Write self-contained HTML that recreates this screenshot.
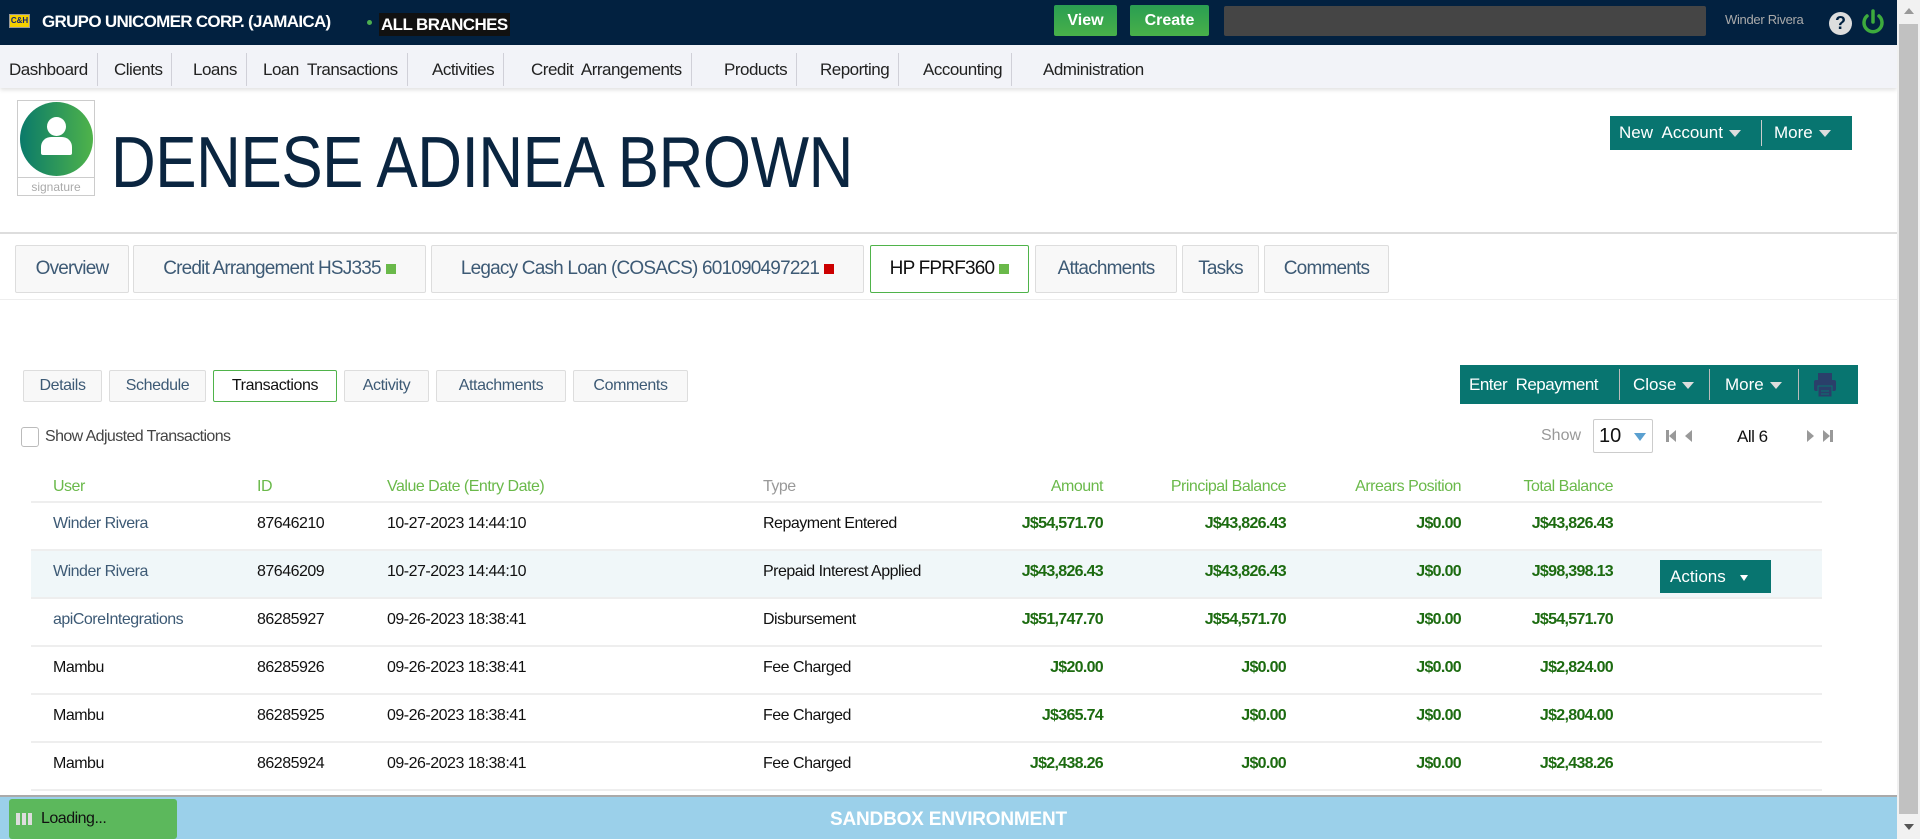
<!DOCTYPE html>
<html><head><meta charset="utf-8"><style>
*{box-sizing:border-box;margin:0;padding:0}
body{width:1920px;height:839px;overflow:hidden;background:#fff;font-family:"Liberation Sans",sans-serif;position:relative;color:#222}
.a{position:absolute;white-space:nowrap}
#top{left:0;top:0;width:1897px;height:45px;background:#022140}
#nav{left:0;top:45px;width:1897px;height:43px;background:#f2f3f8;box-shadow:0 2px 4px rgba(0,0,0,.12)}
.ni{position:absolute;top:8px;height:33px;line-height:33px;font-size:17px;color:#222;border-right:1px solid #d0d0d8;padding:0 9px;letter-spacing:-.5px}
.tab{position:absolute;top:245px;height:48px;line-height:46px;border:1px solid #ddd;border-radius:2px;background:#f8f8f8;font-size:19px;color:#3d5a75;text-align:center;letter-spacing:-.8px}
.st{position:absolute;top:370px;height:32px;line-height:30px;border:1px solid #ddd;border-radius:2px;background:#f8f8f8;font-size:16px;color:#3d5a75;text-align:center;letter-spacing:-.4px}
.sq{display:inline-block;width:10px;height:10px;margin-left:5px;vertical-align:middle}
.th{position:absolute;top:478px;font-size:16px;color:#6ab94a;letter-spacing:-.5px}
.row{position:absolute;left:31px;width:1791px;height:48px;border-bottom:2px solid #eee}
.c{position:absolute;top:12px;font-size:16px;letter-spacing:-.5px;white-space:nowrap}
.u{color:#3d5a75}.n{color:#111}
.m{color:#1c6b10;font-weight:bold;text-align:right;letter-spacing:-.7px}
.tri{display:inline-block;width:0;height:0;border-left:6px solid transparent;border-right:6px solid transparent;border-top:7px solid #fff;vertical-align:middle;margin-left:6px}
</style></head><body>
<div class="a" id="top">
 <div class="a" style="left:9px;top:14px;width:21px;height:14px;background:#f5d000;border:1px solid #999;font-size:8px;color:#127;font-weight:bold;line-height:12px;text-align:center">C&amp;H</div>
 <div class="a" style="left:42px;top:12px;font-size:17px;font-weight:bold;color:#fff;letter-spacing:-.7px">GRUPO UNICOMER CORP. (JAMAICA)</div>
 <div class="a" style="left:367px;top:20px;width:5px;height:5px;border-radius:50%;background:#4caf50"></div>
 <div class="a" style="left:379px;top:13px;height:23px;background:#111;color:#fff;font-weight:bold;font-size:17px;line-height:23px;padding:0 2px;letter-spacing:-.6px">ALL BRANCHES</div>
 <div class="a" style="left:1054px;top:5px;width:63px;height:31px;background:linear-gradient(#2a9e52,#48b049);border-radius:2px;color:#fff;font-weight:bold;font-size:16px;line-height:31px;text-align:center">View</div>
 <div class="a" style="left:1130px;top:5px;width:79px;height:31px;background:linear-gradient(#2a9e52,#48b049);border-radius:2px;color:#fff;font-weight:bold;font-size:16px;line-height:31px;text-align:center">Create</div>
 <div class="a" style="left:1224px;top:6px;width:482px;height:30px;background:#454545;border-radius:2px"></div>
 <div class="a" style="left:1725px;top:12px;font-size:13px;color:#aaa;letter-spacing:-.3px">Winder Rivera</div>
 <div class="a" style="left:1829px;top:12px;width:23px;height:23px;border-radius:50%;background:#ddd;color:#022140;font-weight:bold;font-size:18px;line-height:23px;text-align:center">?</div>
 <svg class="a" style="left:1860px;top:9px" width="26" height="28" viewBox="0 0 26 28"><path d="M7 7 A9 9 0 1 0 19 7" fill="none" stroke="#3dab3d" stroke-width="3.5" stroke-linecap="round"/><line x1="13" y1="2" x2="13" y2="13" stroke="#3dab3d" stroke-width="3.5" stroke-linecap="round"/></svg>
</div>
<div class="a" id="nav">
 <div class="ni" style="left:0">Dashboard</div>
 <div class="ni" style="left:105px">Clients</div>
 <div class="ni" style="left:184px">Loans</div>
 <div class="ni" style="left:254px">Loan&nbsp; Transactions</div>
 <div class="ni" style="left:423px">Activities</div>
 <div class="ni" style="left:522px">Credit&nbsp; Arrangements</div>
 <div class="ni" style="left:715px">Products</div>
 <div class="ni" style="left:811px">Reporting</div>
 <div class="ni" style="left:914px">Accounting</div>
 <div class="ni" style="left:1034px;border:none">Administration</div>
</div>
<div class="a" style="left:17px;top:100px;width:78px;height:96px;border:1px solid #ccc"></div>
<div class="a" style="left:20px;top:102px;width:73px;height:74px;border-radius:50%;background:linear-gradient(90deg,#0a7a6a,#4fb34a)"></div>
<div class="a" style="left:47px;top:117px;width:19px;height:19px;border-radius:50%;background:#fff"></div>
<div class="a" style="left:41px;top:137px;width:31px;height:18px;border-radius:10px 10px 2px 2px;background:#fff"></div>
<div class="a" style="left:17px;top:177px;width:78px;height:19px;border-top:1px solid #ccc;font-size:12px;color:#aaa;text-align:center;line-height:18px">signature</div>
<div class="a" style="left:111px;top:118px;font-size:72px;color:#0a2540;letter-spacing:-.5px;line-height:90px;transform:scaleX(.86);transform-origin:left top">DENESE ADINEA BROWN</div>
<div class="a" style="left:1610px;top:116px;width:242px;height:34px;background:#087570;color:#fff;font-size:17px;line-height:34px">
 <span class="a" style="left:9px;top:0">New&nbsp; Account<span class="tri" style="border-top-color:#ddd"></span></span>
 <span class="a" style="left:151px;top:4px;width:1px;height:26px;background:#ccc"></span>
 <span class="a" style="left:164px;top:0">More<span class="tri" style="border-top-color:#ddd"></span></span>
</div>
<div class="a" style="left:0;top:232px;width:1897px;height:2px;background:#ddd"></div>
<div class="tab" style="left:15px;width:114px">Overview</div>
<div class="tab" style="left:133px;width:293px">Credit Arrangement HSJ335<span class="sq" style="background:#6ab94a"></span></div>
<div class="tab" style="left:431px;width:433px">Legacy Cash Loan (COSACS) 601090497221<span class="sq" style="background:#c00"></span></div>
<div class="tab" style="left:870px;width:159px;border-color:#4fb34a;color:#111;background:#fff">HP FPRF360<span class="sq" style="background:#6ab94a"></span></div>
<div class="tab" style="left:1035px;width:142px">Attachments</div>
<div class="tab" style="left:1182px;width:77px">Tasks</div>
<div class="tab" style="left:1264px;width:125px">Comments</div>
<div class="a" style="left:0;top:299px;width:1897px;height:1px;background:#eee"></div>
<div class="st" style="left:23px;width:79px">Details</div>
<div class="st" style="left:109px;width:97px">Schedule</div>
<div class="st" style="left:213px;width:124px;border-color:#4fb34a;color:#111;background:#fff">Transactions</div>
<div class="st" style="left:344px;width:85px">Activity</div>
<div class="st" style="left:436px;width:130px">Attachments</div>
<div class="st" style="left:573px;width:115px">Comments</div>
<div class="a" style="left:1460px;top:365px;width:398px;height:39px;background:#087570;color:#fff;font-size:17px;line-height:39px">
 <span class="a" style="left:9px;top:0;letter-spacing:-.5px">Enter&nbsp; Repayment</span>
 <span class="a" style="left:159px;top:4px;width:1px;height:31px;background:#bbb"></span>
 <span class="a" style="left:173px;top:0">Close<span class="tri" style="border-top-color:#ddd"></span></span>
 <span class="a" style="left:249px;top:4px;width:1px;height:31px;background:#bbb"></span>
 <span class="a" style="left:265px;top:0">More<span class="tri" style="border-top-color:#ddd"></span></span>
 <span class="a" style="left:338px;top:4px;width:1px;height:31px;background:#bbb"></span>
 <svg class="a" style="left:353px;top:7px" width="24" height="26" viewBox="0 0 24 26"><rect x="5" y="1" width="14" height="7" fill="#2a3f6a"/><rect x="1" y="8" width="22" height="11" rx="2" fill="#2a3f6a"/><rect x="5" y="14" width="14" height="11" fill="#2a3f6a" stroke="#087570" stroke-width="1"/><line x1="8" y1="19" x2="16" y2="19" stroke="#087570"/><line x1="8" y1="22" x2="16" y2="22" stroke="#087570"/></svg>
</div>
<div class="a" style="left:21px;top:427px;width:18px;height:20px;border:1px solid #bbb;border-radius:3px;background:#fff"></div>
<div class="a" style="left:45px;top:428px;font-size:16px;color:#444;letter-spacing:-.6px">Show Adjusted Transactions</div>
<div class="a" style="left:1541px;top:427px;font-size:16px;color:#999">Show</div>
<div class="a" style="left:1593px;top:419px;width:60px;height:34px;border:1px solid #ccc;border-radius:2px;background:#fff"><span class="a" style="left:5px;top:5px;font-size:20px;color:#111">10</span><span class="a" style="left:40px;top:13px;width:0;height:0;border-left:6px solid transparent;border-right:6px solid transparent;border-top:8px solid #5aa0d0"></span></div>
<svg class="a" style="left:1666px;top:429px" width="30" height="14" viewBox="0 0 30 14"><rect x="0" y="1" width="3" height="12" fill="#999"/><path d="M10 1 L3 7 L10 13Z" fill="#999"/><path d="M26 1 L19 7 L26 13Z" fill="#999"/></svg>
<div class="a" style="left:1737px;top:427px;font-size:17px;color:#111;letter-spacing:-.5px">All 6</div>
<svg class="a" style="left:1806px;top:429px" width="30" height="14" viewBox="0 0 30 14"><path d="M1 1 L8 7 L1 13Z" fill="#999"/><path d="M17 1 L24 7 L17 13Z" fill="#999"/><rect x="24" y="1" width="3" height="12" fill="#999"/></svg>
<div class="th" style="left:53px">User</div>
<div class="th" style="left:257px">ID</div>
<div class="th" style="left:387px">Value Date (Entry Date)</div>
<div class="th" style="left:763px;color:#999">Type</div>
<div class="th" style="left:1003px;width:100px;text-align:right">Amount</div>
<div class="th" style="left:1086px;width:200px;text-align:right">Principal Balance</div>
<div class="th" style="left:1261px;width:200px;text-align:right">Arrears Position</div>
<div class="th" style="left:1413px;width:200px;text-align:right">Total Balance</div>
<div class="a" style="left:31px;top:501px;width:1791px;height:2px;background:#eee"></div>

<div class="row" style="top:503px"><span class="c u" style="left:22px">Winder Rivera</span><span class="c n" style="left:226px">87646210</span><span class="c n" style="left:356px">10-27-2023 14:44:10</span><span class="c n" style="left:732px">Repayment Entered</span><span class="c m" style="left:872px;width:200px">J$54,571.70</span><span class="c m" style="left:1055px;width:200px">J$43,826.43</span><span class="c m" style="left:1230px;width:200px">J$0.00</span><span class="c m" style="left:1382px;width:200px">J$43,826.43</span></div>
<div class="row" style="top:551px;background:#f0f7f9"><span class="c u" style="left:22px">Winder Rivera</span><span class="c n" style="left:226px">87646209</span><span class="c n" style="left:356px">10-27-2023 14:44:10</span><span class="c n" style="left:732px">Prepaid Interest Applied</span><span class="c m" style="left:872px;width:200px">J$43,826.43</span><span class="c m" style="left:1055px;width:200px">J$43,826.43</span><span class="c m" style="left:1230px;width:200px">J$0.00</span><span class="c m" style="left:1382px;width:200px">J$98,398.13</span>
 <span class="a" style="left:1629px;top:9px;width:111px;height:33px;background:#087570;color:#fff;font-size:17px;line-height:33px;padding-left:10px">Actions <span class="tri" style="border-left-width:4px;border-right-width:4px;border-top-width:6px;margin-left:10px"></span></span></div>
<div class="row" style="top:599px"><span class="c u" style="left:22px">apiCoreIntegrations</span><span class="c n" style="left:226px">86285927</span><span class="c n" style="left:356px">09-26-2023 18:38:41</span><span class="c n" style="left:732px">Disbursement</span><span class="c m" style="left:872px;width:200px">J$51,747.70</span><span class="c m" style="left:1055px;width:200px">J$54,571.70</span><span class="c m" style="left:1230px;width:200px">J$0.00</span><span class="c m" style="left:1382px;width:200px">J$54,571.70</span></div>
<div class="row" style="top:647px"><span class="c n" style="left:22px">Mambu</span><span class="c n" style="left:226px">86285926</span><span class="c n" style="left:356px">09-26-2023 18:38:41</span><span class="c n" style="left:732px">Fee Charged</span><span class="c m" style="left:872px;width:200px">J$20.00</span><span class="c m" style="left:1055px;width:200px">J$0.00</span><span class="c m" style="left:1230px;width:200px">J$0.00</span><span class="c m" style="left:1382px;width:200px">J$2,824.00</span></div>
<div class="row" style="top:695px"><span class="c n" style="left:22px">Mambu</span><span class="c n" style="left:226px">86285925</span><span class="c n" style="left:356px">09-26-2023 18:38:41</span><span class="c n" style="left:732px">Fee Charged</span><span class="c m" style="left:872px;width:200px">J$365.74</span><span class="c m" style="left:1055px;width:200px">J$0.00</span><span class="c m" style="left:1230px;width:200px">J$0.00</span><span class="c m" style="left:1382px;width:200px">J$2,804.00</span></div>
<div class="row" style="top:743px"><span class="c n" style="left:22px">Mambu</span><span class="c n" style="left:226px">86285924</span><span class="c n" style="left:356px">09-26-2023 18:38:41</span><span class="c n" style="left:732px">Fee Charged</span><span class="c m" style="left:872px;width:200px">J$2,438.26</span><span class="c m" style="left:1055px;width:200px">J$0.00</span><span class="c m" style="left:1230px;width:200px">J$0.00</span><span class="c m" style="left:1382px;width:200px">J$2,438.26</span></div>

<div class="a" style="left:0;top:795px;width:1897px;height:44px;background:#9bd0ea;border-top:2px solid #aaa"></div>
<div class="a" style="left:0;top:809px;width:1897px;text-align:center;font-size:19px;font-weight:bold;color:#fff;letter-spacing:-.2px">SANDBOX ENVIRONMENT</div>
<div class="a" style="left:9px;top:799px;width:168px;height:40px;background:#5cb85c;border-radius:3px;font-size:16px;color:#111;line-height:40px;padding-left:32px;letter-spacing:-.5px">Loading...</div>
<div class="a" style="left:16px;top:813px;width:4px;height:12px;background:#ddd"></div>
<div class="a" style="left:22px;top:813px;width:4px;height:12px;background:#ddd"></div>
<div class="a" style="left:28px;top:813px;width:4px;height:12px;background:#ddd"></div>
<div class="a" style="left:1897px;top:0;width:23px;height:839px;background:#f1f1f1"></div>
<div class="a" style="left:1899px;top:24px;width:19px;height:790px;background:#c1c1c1"></div>
<div class="a" style="left:1904px;top:8px;width:0;height:0;border-left:5px solid transparent;border-right:5px solid transparent;border-bottom:6px solid #999"></div>
<div class="a" style="left:1904px;top:824px;width:0;height:0;border-left:5px solid transparent;border-right:5px solid transparent;border-top:6px solid #555"></div>
</body></html>
